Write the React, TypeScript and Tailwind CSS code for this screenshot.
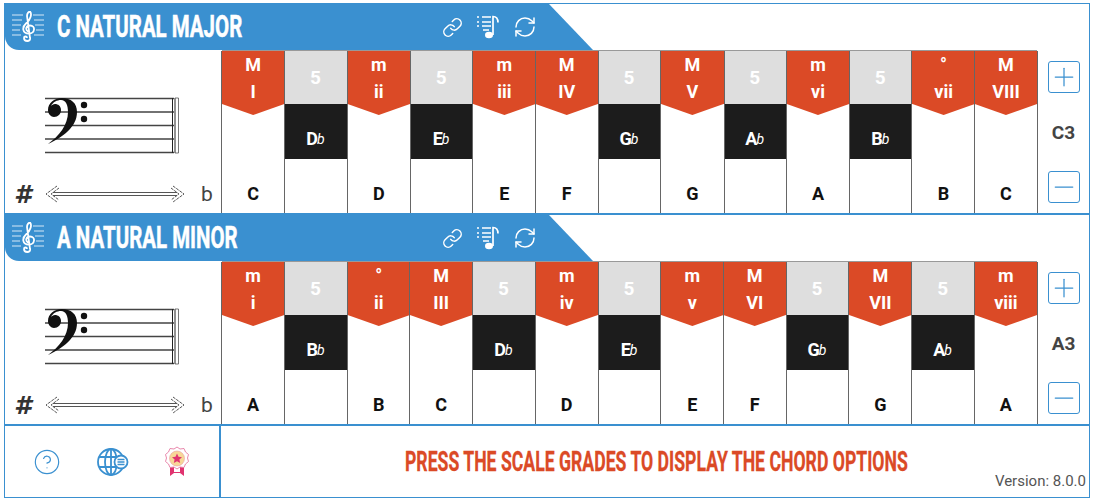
import { CircleHelp, Link, Minus, Plus, RefreshCw } from 'lucide-react'

type KeyData = { top?: string; bottom?: string; note: string; black?: boolean }

const major: KeyData[] = [
	{ top: 'M', bottom: 'I', note: 'C' },
	{ note: 'D', black: true },
	{ top: 'm', bottom: 'ii', note: 'D' },
	{ note: 'E', black: true },
	{ top: 'm', bottom: 'iii', note: 'E' },
	{ top: 'M', bottom: 'IV', note: 'F' },
	{ note: 'G', black: true },
	{ top: 'M', bottom: 'V', note: 'G' },
	{ note: 'A', black: true },
	{ top: 'm', bottom: 'vi', note: 'A' },
	{ note: 'B', black: true },
	{ top: '°', bottom: 'vii', note: 'B' },
	{ top: 'M', bottom: 'VIII', note: 'C' },
]

const minor: KeyData[] = [
	{ top: 'm', bottom: 'i', note: 'A' },
	{ note: 'B', black: true },
	{ top: '°', bottom: 'ii', note: 'B' },
	{ top: 'M', bottom: 'III', note: 'C' },
	{ note: 'D', black: true },
	{ top: 'm', bottom: 'iv', note: 'D' },
	{ note: 'E', black: true },
	{ top: 'm', bottom: 'v', note: 'E' },
	{ top: 'M', bottom: 'VI', note: 'F' },
	{ note: 'G', black: true },
	{ top: 'M', bottom: 'VII', note: 'G' },
	{ note: 'A', black: true },
	{ top: 'm', bottom: 'viii', note: 'A' },
]

function TrebleIcon() {
	return (
		<svg width="34" height="32" viewBox="0 0 34 32" fill="none" stroke="white">
			<path d="M1 4h11M22 4h11M1 9h10M23 9h10M1 14h9M24 14h9M1 19h8M25 19h8M1 24h9M23 24h10" strokeWidth="1.2" opacity="0.8" />
			<path
				d="M19 27c1 4-6 4-6 0 0-2 3-2 3 0M16 5c0-3 2-4.500 3-4.500 2 2 1 8-4 12-4 3.500-4 10 3 10 6 0 7-8 1-8-4 0-5 4-2 6M16 5l3 22"
				strokeWidth="1.800"
			/>
		</svg>
	)
}

function MusicListIcon() {
	return (
		<svg width="24" height="24" viewBox="0 0 24 24" fill="none" stroke="white" strokeWidth="1.7">
			<path d="M1 2h2M6 2h9M1 7h2M6 7h9M1 11h2M6 11h9M7 15h6" />
			<path d="M17 20V1.500c3 0 5 2 5 6" />
			<ellipse cx="13" cy="20" rx="4" ry="3.200" fill="white" stroke="none" />
		</svg>
	)
}

function GlobeIcon() {
	return (
		<svg width="32" height="28" viewBox="0 0 32 28" fill="none" stroke="#3a90d0" strokeWidth="1.800">
			<circle cx="14" cy="14" r="13" />
			<ellipse cx="14" cy="14" rx="6" ry="13" />
			<path d="M14 1v26M2 9h24M2 19h24" />
			<circle cx="24" cy="14" r="6.500" fill="white" />
			<path d="M20.500 11.500h7M20.500 14h7M20.500 16.500h7" strokeWidth="1.300" />
		</svg>
	)
}

function BadgeIcon() {
	return (
		<svg width="26" height="31" viewBox="0 0 26 31" fill="none">
			<path d="M6 19v11l4-3h6l4 3V19z" fill="#e0336f" />
			<path d="M10 20v6h6v-6z" fill="white" />
			<path
				d="M13 1l3 2 4-.5 1.500 3.500 3 2.500-1 3.500 1 3.500-3 2.500-1.500 3.500-4-.5-3 2-3-2-4 .5-1.500-3.500-3-2.500 1-3.500-1-3.500 3-2.500L6 2.500l4 .5z"
				fill="white"
				stroke="#e77ba3"
				strokeWidth="0.900"
			/>
			<circle cx="13" cy="12.500" r="7.500" fill="#f7d797" stroke="#e9a0a0" strokeWidth="0.600" />
			<path d="M13 7.500l1.500 3.300 3.500.4-2.600 2.300.8 3.500-3.200-1.800-3.200 1.800.8-3.500L8 11.200l3.500-.4z" fill="#e0336f" />
		</svg>
	)
}

function Staff() {
	return (
		<svg width="135" height="57" viewBox="0 0 135 57" fill="none">
			<path d="M0 1.500h129M0 15h129M0 28.500h129M0 42h129M0 55.500h129" stroke="#444" strokeWidth="1.300" />
			<path d="M127.500 1v55M130 1v55" stroke="#222" strokeWidth="1" />
			<path d="M130 1h3.500v55H130" stroke="#555" strokeWidth="0.800" />
			<path
				d="M3 47C18 40 32 30 32 15 32 6 26 1 17 1 9 1 3 6 3 13c0 4 3 7 6 7 4 0 7-3 7-7 0-4-3-6-6-6-2 0-3 1-4 2 2-4 6-6 10-6 5 0 7 5 7 12C23 28 14 39 3 47z"
				fill="#111"
			/>
			<circle cx="39" cy="8" r="3.200" fill="#111" />
			<circle cx="39" cy="22" r="3.200" fill="#111" />
		</svg>
	)
}

function Arrow() {
	return (
		<svg width="144" height="20" viewBox="0 0 144 20" fill="none" stroke="#555" strokeWidth="1">
			<path d="M10 8.500h124M10 11.500h124" />
			<path d="M14 2L3 10l11 8M16 4l-8 6 8 6M130 2l11 8-11 8M128 4l8 6-8 6" strokeDasharray="3 1" />
		</svg>
	)
}

function PianoKey({ item }: { item: KeyData }) {
	if (item.black) {
		return (
			<div className="flex-1 flex flex-col border-r border-[#999]">
				<div className="h-[53px] bg-[#dedede] flex items-center justify-center pt-[2px] text-white font-bold text-[19px]">5</div>
				<div className="h-[55px] bg-[#1c1c1c] flex items-center justify-center pt-[14px] text-white font-bold text-[18px] leading-none">
					{item.note}
					<span className="text-[14px] font-normal italic -ml-px mt-px">b</span>
				</div>
				<div className="flex-1 bg-white" />
			</div>
		)
	}
	return (
		<div className="relative flex-1 flex flex-col border-x border-[#666] -mx-px bg-white">
			<div className="h-[53px] bg-[#db4a26] flex flex-col items-center text-white font-bold text-lg leading-[27px]">
				<span>{item.top}</span>
				<span>{item.bottom}</span>
			</div>
			<div className="absolute top-[53px] inset-x-0 h-[11px] bg-[#db4a26] [clip-path:polygon(0_0,100%_0,50%_100%)]" />
			<div className="flex-1 flex items-end justify-center pb-[6px] text-[#111] font-bold text-[18px]">
				{item.note}
			</div>
		</div>
	)
}

function ScaleSection({ title, keys, octave }: { title: string; keys: KeyData[]; octave: string }) {
	return (
		<div className="flex flex-col h-[211px] border-b-2 border-[#3a90d0]">
			<div className="flex items-center h-[46px] w-[588px] shrink-0 pl-[6px] pr-[56px] bg-[#3a90d0] rounded-bl-[14px] [clip-path:polygon(0_0,544px_0,100%_100%,0_100%)]">
				<TrebleIcon />
				<div className="ml-[12px] w-[186px] whitespace-nowrap">
					<span className="inline-block origin-left scale-x-[0.66] text-white font-bold text-[31px] leading-none [-webkit-text-stroke:0.5px_white]">
						{title}
					</span>
				</div>
				<div className="ml-auto flex items-center gap-[13px]">
					<Link size={21} color="white" strokeWidth={1.7} />
					<MusicListIcon />
					<RefreshCw size={24} color="white" strokeWidth={1.5} />
				</div>
			</div>
			<div className="flex flex-1 min-h-0">
				<div className="w-[217px] shrink-0 flex flex-col">
					<div className="flex-1 pl-[40px] pt-[47px]">
						<Staff />
					</div>
					<div className="flex items-center h-[40px] pl-[9px] pt-[2px]">
						<span className="w-[29px] text-[#333] text-[25px] font-bold italic leading-none [font-family:'DejaVu_Sans',sans-serif]">#</span>
						<Arrow />
						<span className="ml-[14px] text-[#444] text-[21px] font-normal leading-none">b</span>
					</div>
				</div>
				<div className="flex flex-1 min-w-0 border-t border-[#999]">
					{keys.map((item, i) => (
						<PianoKey key={i} item={item} />
					))}
				</div>
				<div className="w-[52px] shrink-0 flex flex-col items-center pl-px pt-[11px] pb-[10px] justify-between">
					<button className="w-[32px] h-[32px] rounded-[3px] border-[1.5px] border-[#3a90d0] flex items-center justify-center">
						<Plus size={32} color="#3a90d0" strokeWidth={1} />
					</button>
					<span className="text-[#444] font-bold text-[19px] pt-[2px]">{octave}</span>
					<button className="w-[32px] h-[32px] rounded-[3px] border-[1.5px] border-[#3a90d0] flex items-center justify-center">
						<Minus size={32} color="#3a90d0" strokeWidth={1} />
					</button>
				</div>
			</div>
		</div>
	)
}

export default function App() {
	return (
		<div className="w-[1095px] h-[500px] pt-[3px] pl-[4px] bg-white overflow-hidden [font-family:Roboto,sans-serif]">
			<div className="w-[1086px] h-[495px] border border-[#3a90d0] flex flex-col">
				<ScaleSection title="C NATURAL MAJOR" keys={major} octave="C3" />
				<ScaleSection title="A NATURAL MINOR" keys={minor} octave="A3" />
				<div className="flex flex-1 min-h-0">
					<div className="w-[216px] shrink-0 flex items-center pl-[28px] border-r-2 border-[#3a90d0]">
						<CircleHelp size={28} color="#3a90d0" strokeWidth={1} />
						<div className="ml-[36px]">
							<GlobeIcon />
						</div>
						<div className="ml-[35px]">
							<BadgeIcon />
						</div>
					</div>
					<div className="relative flex-1 min-w-0 flex items-center">
						<div className="ml-[184px] pt-[3px] whitespace-nowrap">
							<span className="inline-block origin-left scale-x-[0.63] text-[#db4a26] font-bold text-[28px] leading-none [-webkit-text-stroke:0.3px_#db4a26]">
								PRESS THE SCALE GRADES TO DISPLAY THE CHORD OPTIONS
							</span>
						</div>
						<span className="absolute right-[3px] bottom-[5px] text-[#555] text-[15px]">Version: 8.0.0</span>
					</div>
				</div>
			</div>
		</div>
	)
}
